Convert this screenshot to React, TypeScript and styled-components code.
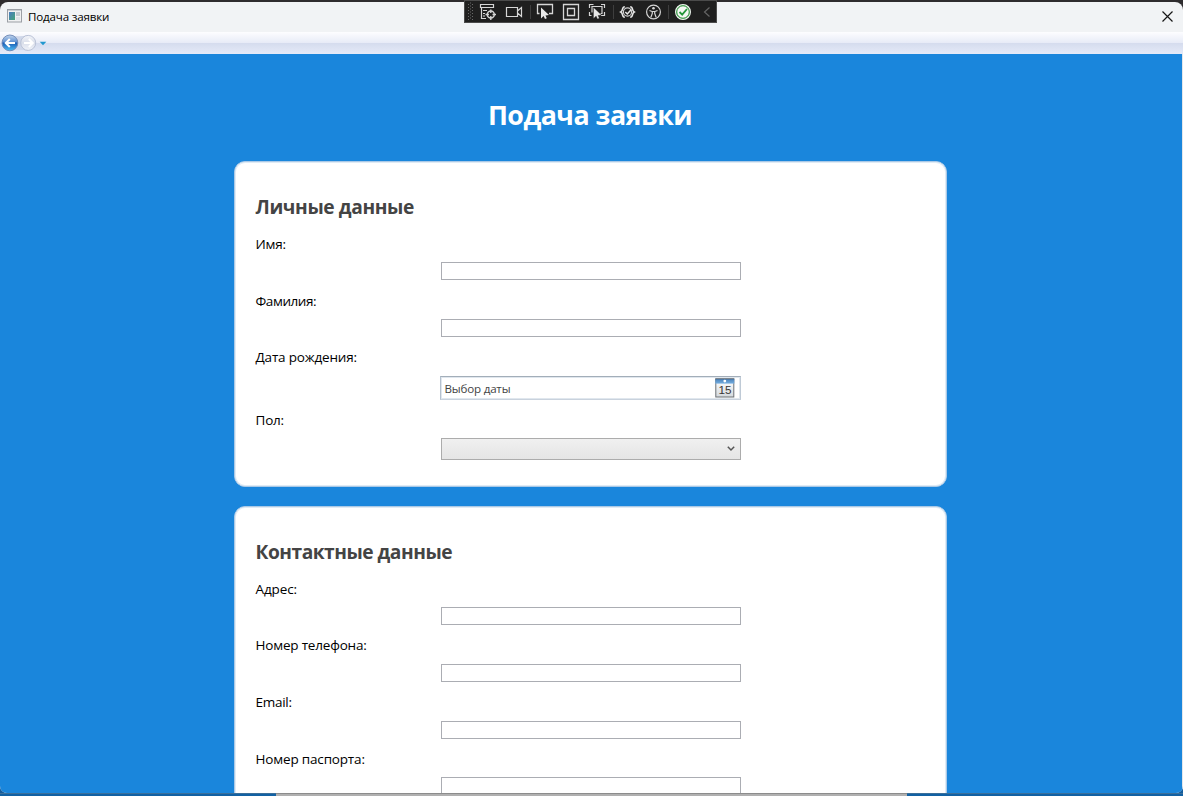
import React from "react";
import styled, { createGlobalStyle } from "styled-components";

const GlobalStyle = createGlobalStyle`
  * { box-sizing: border-box; }
  html, body { margin: 0; padding: 0; overflow: hidden; }
  body { font-family: "Open Sans", "Noto Sans", sans-serif; color: #000; background: #2b2a2c; }
`;

const Desktop = styled.div`
  position: relative;
  width: 1183px;
  height: 796px;
  padding-top: 2px;
  overflow: hidden;
  background: linear-gradient(#2e2c2e 0 50%, #145c9c 50%);
`;

const Window = styled.div`
  display: flex;
  flex-direction: column;
  height: 791px;
  border-radius: 8px 8px 7px 7px;
  overflow: hidden;
  background: #f1f3f5;
`;

const TitleBar = styled.header`
  display: flex;
  align-items: center;
  flex: 0 0 30px;
  padding: 0 10px 2px 7px;
`;

const Line = styled.span<{ $size: number; $spacing?: number; $color?: string; $bold?: boolean }>`
  font-size: ${(p) => p.$size}px;
  letter-spacing: ${(p) => p.$spacing ?? 0}px;
  color: ${(p) => p.$color ?? "#000"};
  font-weight: ${(p) => (p.$bold ? 700 : 400)};
  white-space: nowrap;
`;

const WindowTitle = styled(Line)`
  flex: 1;
  margin-left: 6px;
  line-height: 16px;
  padding-top: 1px;
`;

const NavBar = styled.nav`
  display: flex;
  align-items: center;
  flex: 0 0 22px;
  background: linear-gradient(#fdfdff 0, #e7ebf7 50%, #d5dcee 51%, #e5eaf8 100%);
`;

const Page = styled.main`
  flex: 1;
  display: flex;
  flex-direction: column;
  align-items: center;
  min-height: 0;
  padding-right: 2px;
  overflow: hidden;
  background: #1a86dc;
  border-right: 1px solid #e3e6ea;
`;

const PageTitle = styled.h1`
  flex: none;
  margin: 39px 0 28px;
  height: 40px;
  line-height: 40px;
`;

const Card = styled.section`
  flex: none;
  width: 713px;
  margin-bottom: 19px;
  padding: 29px 20px 26px;
  border: 1px solid #abc9e6;
  border-radius: 11px;
  background: #fff;
  box-shadow: inset 0 0 0 1px #e0ebf5;
`;

const CardTitle = styled.h2`
  margin: 0 0 14px;
  padding-left: 1px;
  height: 30px;
  line-height: 28px;
`;

const Field = styled.div<{ $gap: number; $after: number }>`
  display: flex;
  flex-direction: column;
  align-items: center;
  gap: ${(p) => p.$gap}px;
  margin-bottom: ${(p) => p.$after}px;
`;

const Label = styled(Line)`
  align-self: flex-start;
  height: 18px;
  padding-left: 1px;
  line-height: 18px;
`;

const TextBox = styled.div`
  width: 300px;
  height: 18px;
  margin-left: 1px;
  border: 1px solid #abadb3;
  background: #fff;
`;

const DateBox = styled.div`
  display: flex;
  align-items: center;
  justify-content: space-between;
  width: 301px;
  height: 24px;
  padding: 0 5px 0 4px;
  border: 1px solid;
  border-color: #a3aeb9 #bfcad6 #c9d2dd #b5c1ce;
  box-shadow: inset 0 0 0 1px #e0e7ee;
`;

const Select = styled.div`
  display: flex;
  align-items: center;
  justify-content: flex-end;
  width: 300px;
  height: 22px;
  margin-left: 1px;
  padding-right: 5px;
  border: 1px solid #acacac;
  background: linear-gradient(#f0f0f0, #e5e5e5);
`;

const DebugBar = styled.div`
  position: absolute;
  top: 0;
  left: 464px;
  display: flex;
  width: 253px;
  height: 23px;
  border: 1px solid #4b4b4b;
  background: #1f1f1f;
`;

const TaskStrip = styled.footer`
  display: grid;
  grid-template-columns: 276px 631px 276px;
  height: 3px;
`;

const Strip = styled.div<{ $grey?: boolean }>`
  border-top: 1px solid ${(p) => (p.$grey ? "#8c8c8c" : "#3b6f9a")};
  background: ${(p) => (p.$grey ? "#b0b0b0" : "#1261a3")};
`;

function AppIcon() {
  return (
    <svg width="15" height="14" viewBox="0 0 15 14">
      <defs>
        <linearGradient id="app" x1="0" x2="1" y2="1">
          <stop stopColor="#4b7cc0" /><stop offset="1" stopColor="#45a579" />
        </linearGradient>
      </defs>
      <rect x=".5" y=".5" width="14" height="12.5" fill="#f0f1f2" stroke="#9b9fa5" />
      <path d="M1 1.5h13" stroke="#c9cdd2" />
      <rect x="2" y="3" width="6" height="8" fill="url(#app)" />
      <rect x="9" y="3" width="4" height="4" fill="#c5cbd1" />
      <rect x="9" y="8" width="4" height="3" fill="#dfe3e7" />
    </svg>
  );
}

function NavButtons() {
  return (
    <svg width="50" height="22" viewBox="0 0 50 22">
      <defs>
        <linearGradient id="back" x2="0" y2="1">
          <stop stopColor="#c3d5ec" /><stop offset=".45" stopColor="#5c90d2" />
          <stop offset=".5" stopColor="#1c5cb4" /><stop offset="1" stopColor="#4cc0f6" />
        </linearGradient>
        <linearGradient id="fwd" x2="0" y2="1">
          <stop stopColor="#f3f5fa" /><stop offset=".5" stopColor="#d9deea" /><stop offset="1" stopColor="#f2f4fa" />
        </linearGradient>
      </defs>
      <path d="M10 3Q19 5.5 28 3V19Q19 16.500 10 19Z" fill="#cfd7e9" />
      <circle cx="9.900" cy="10.900" r="7.900" fill="url(#back)" stroke="#6c87b4" strokeWidth=".9" />
      <circle cx="28.200" cy="10.900" r="7.500" fill="url(#fwd)" stroke="#b4bdd2" strokeWidth=".9" />
      <path d="M15 11H6M9.800 7 5.800 11l4 4" fill="none" stroke="#fff" strokeWidth="2" />
      <path d="M24 11h8.500M28.800 7l4 4-4 4" fill="none" stroke="#fff" strokeWidth="2" />
      <path d="M39.700 9.700h6.600l-3.300 3.500z" fill="#2298cf" />
    </svg>
  );
}

function CloseIcon() {
  return (
    <svg width="11" height="11" viewBox="0 0 11 11">
      <path d="M.5.5l10 10M10.500.5l-10 10" stroke="#161616" strokeWidth="1.200" />
    </svg>
  );
}

function CalendarIcon() {
  return (
    <svg width="20" height="20" viewBox="0 0 20 20">
      <defs>
        <linearGradient id="sheet" x2="0" y2="1">
          <stop stopColor="#fff" /><stop offset="1" stopColor="#d5dade" />
        </linearGradient>
        <linearGradient id="binding" x2="0" y2="1">
          <stop stopColor="#4a82ba" /><stop offset="1" stopColor="#75aee0" />
        </linearGradient>
      </defs>
      <rect x=".8" y="1" width="18" height="18" fill="url(#sheet)" stroke="#6b7075" />
      <rect x=".3" y="1" width="19" height="4.600" fill="url(#binding)" />
      <path d="M.3.8h19" stroke="#51606e" strokeWidth=".8" />
      <circle cx="9.800" cy="3.100" r="1.400" fill="#fff" />
      <text x="3.500" y="16" textLength="13" lengthAdjust="spacingAndGlyphs" fontFamily="Liberation Sans" fontSize="10" fill="#363636">15</text>
    </svg>
  );
}

function ChevronIcon() {
  return (
    <svg width="8" height="6" viewBox="0 0 8 6">
      <path d="M.8.8 4 4 7.200.8" fill="none" stroke="#555" strokeWidth="1.500" />
    </svg>
  );
}

function DebugTools() {
  const cursor = "M0 0 0 11 2.600 8.600 4 11.500 5.800 10.700 4.500 8 8 7.500Z";
  return (
    <svg width="251" height="21" viewBox="465 1 251 21" fill="none" stroke="#d6d6d6">
      <g fill="#696969" stroke="none">
        {[4, 7, 10, 13, 16, 19].map((y) => (
          <React.Fragment key={y}>
            <rect x="468" y={y} width="1" height="1" />
            <rect x="472" y={y} width="1" height="1" />
            <rect x="470" y={y - 1.500} width="1" height="1" />
          </React.Fragment>
        ))}
      </g>
      <path d="M530.500 5v14M613.500 5v14M668.500 5v14" stroke="#3e3e3e" />
      <path d="M480.500 4.500h13v3h-13z" strokeWidth="1.200" />
      <path d="M481.500 7v11.500h4.500M483 10.500h4M483 13.500h2M483 16h2" strokeWidth="1.200" />
      <circle cx="490.800" cy="14.500" r="3.500" strokeWidth="1.500" />
      <path d="M490.800 9.500v3.500M490.800 16v4M485.500 14.500h3.500M492.500 14.500h3.500" strokeWidth="1.400" />
      <path d="M506.500 7.500h11v9h-11zM517.500 11l4-3.500v9l-4-3.500" strokeWidth="1.200" />
      <path d="M539.500 13.500h-2v-9h15v9H549" strokeWidth="1.300" />
      <path d={cursor} transform="translate(541 7.500)" fill="#e8e8e8" stroke="none" />
      <path d="M563.500 4.500h15v15h-15zM567.500 8.500h7v7h-7z" strokeWidth="1.300" />
      <path d="M589.500 8V4.500h4M601 4.500h3.500V8M604.500 12v3.500H601M589.500 12v3.500h2M592 12.500v-6h10v7H600.500" strokeWidth="1.200" />
      <path d={cursor} transform="translate(593.500 7.500)" fill="#e8e8e8" stroke="#1f1f1f" strokeWidth=".3" />
      <path d="M624.800 6.700C621.500 6.700 623.500 10.500 620.800 12c2.700 1.500.7 5.300 4 5.300M630.200 6.700C633.500 6.700 631.500 10.500 634.200 12c-2.700 1.500-.7 5.300-4 5.300" stroke="#e6e6e6" strokeWidth="1.600" />
      <circle cx="627.500" cy="12" r="4.100" stroke="#d0d0d0" strokeWidth="1.200" />
      <path d="M625.300 12l2 2 4-4.500" stroke="#e6e6e6" strokeWidth="1.500" />
      <circle cx="653.500" cy="12" r="6.900" strokeWidth="1.200" />
      <circle cx="653.500" cy="8.200" r="1.300" fill="#d6d6d6" stroke="none" />
      <path d="M649.500 10.500l2.500 1h3l2.500-1M652.300 11.500v2l-1.500 4M654.700 11.500v2l1.500 4" strokeWidth="1.200" />
      <circle cx="683" cy="12" r="7.400" fill="#339c42" stroke="#eef3ee" strokeWidth="1.200" />
      <circle cx="683" cy="12" r="6.200" fill="#f4f8f4" stroke="#379443" strokeWidth=".9" />
      <path d="M679.500 12l2.700 2.700L687 9" stroke="#24963a" strokeWidth="1.800" />
      <path d="M709.500 7.500l-5 4.500 5 4.500" stroke="#656565" strokeWidth="1.200" />
    </svg>
  );
}

type FieldSpec = {
  label: string;
  spacing: number;
  gap: number;
  after: number;
  kind?: "date" | "select";
};

const personal: FieldSpec[] = [
  { label: "Имя:", spacing: -0.2, gap: 9, after: 12 },
  { label: "Фамилия:", spacing: -0.42, gap: 9, after: 11 },
  { label: "Дата рождения:", spacing: -0.18, gap: 10, after: 11, kind: "date" },
  { label: "Пол:", spacing: -0.2, gap: 9, after: 0, kind: "select" },
];

const contacts: FieldSpec[] = [
  { label: "Адрес:", spacing: -0.12, gap: 9, after: 11 },
  { label: "Номер телефона:", spacing: -0.19, gap: 10, after: 11 },
  { label: "Email:", spacing: -0.27, gap: 10, after: 11 },
  { label: "Номер паспорта:", spacing: -0.17, gap: 9, after: 12 },
];

function Control({ kind }: { kind?: FieldSpec["kind"] }) {
  if (kind === "date") {
    return (
      <DateBox>
        <Line $size={11.6} $spacing={-0.2} $color="#444">Выбор даты</Line>
        <CalendarIcon />
      </DateBox>
    );
  }
  if (kind === "select") {
    return (
      <Select>
        <ChevronIcon />
      </Select>
    );
  }
  return <TextBox />;
}

function FormCard({ title, spacing, fields }: { title: string; spacing: number; fields: FieldSpec[] }) {
  return (
    <Card>
      <CardTitle>
        <Line $size={19.2} $spacing={spacing} $color="#444" $bold>{title}</Line>
      </CardTitle>
      {fields.map((f) => (
        <Field key={f.label} $gap={f.gap} $after={f.after}>
          <Label $size={13.5} $spacing={f.spacing}>{f.label}</Label>
          <Control kind={f.kind} />
        </Field>
      ))}
    </Card>
  );
}

export default function App() {
  return (
    <Desktop>
      <GlobalStyle />
      <Window>
        <TitleBar>
          <AppIcon />
          <WindowTitle $size={11.6} $spacing={-0.18}>Подача заявки</WindowTitle>
          <CloseIcon />
        </TitleBar>
        <NavBar>
          <NavButtons />
        </NavBar>
        <Page>
          <PageTitle>
            <Line $size={26.8} $spacing={-0.52} $color="#fff" $bold>Подача заявки</Line>
          </PageTitle>
          <FormCard title="Личные данные" spacing={-0.38} fields={personal} />
          <FormCard title="Контактные данные" spacing={-0.49} fields={contacts} />
        </Page>
      </Window>
      <TaskStrip>
        <Strip />
        <Strip $grey />
        <Strip />
      </TaskStrip>
      <DebugBar>
        <DebugTools />
      </DebugBar>
    </Desktop>
  );
}
